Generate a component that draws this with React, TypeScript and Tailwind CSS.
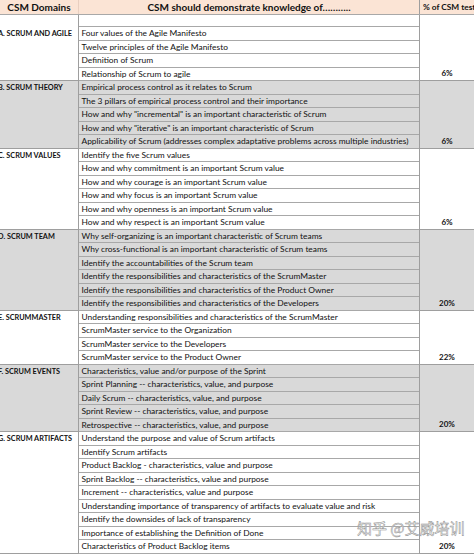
import React from 'react';

interface Section {
  label: string;
  items: string[];
  pct: string;
  gray: boolean;
  blankTop?: boolean;
}

const sections: Section[] = [
  {
    label: 'A. SCRUM AND AGILE',
    items: [
      'Four values of the Agile Manifesto',
      'Twelve principles of the Agile Manifesto',
      'Definition of Scrum',
      'Relationship of Scrum to agile',
    ],
    pct: '6%',
    gray: false,
    blankTop: true,
  },
  {
    label: 'B. SCRUM THEORY',
    items: [
      'Empirical process control as it relates to Scrum',
      'The 3 pillars of empirical process control and their importance',
      'How and why "incremental" is an important characteristic of Scrum',
      'How and why "iterative" is an important characteristic of Scrum',
      'Applicability of Scrum (addresses complex adaptative problems across multiple industries)',
    ],
    pct: '6%',
    gray: true,
  },
  {
    label: 'C. SCRUM VALUES',
    items: [
      'Identify the five Scrum values',
      'How and why commitment is an important Scrum value',
      'How and why courage is an important Scrum value',
      'How and why focus is an important Scrum value',
      'How and why openness is an important Scrum value',
      'How and why respect is an important Scrum value',
    ],
    pct: '6%',
    gray: false,
  },
  {
    label: 'D. SCRUM TEAM',
    items: [
      'Why self-organizing is an important characteristic of Scrum teams',
      'Why cross-functional is an important characteristic of Scrum teams',
      'Identify the accountabilities of the Scrum team',
      'Identify the responsibilities and characteristics of the ScrumMaster',
      'Identify the responsibilities and characteristics of the Product Owner',
      'Identify the responsibilities and characteristics of the Developers',
    ],
    pct: '20%',
    gray: true,
  },
  {
    label: 'E. SCRUMMASTER',
    items: [
      'Understanding responsibilities and characteristics of the ScrumMaster',
      'ScrumMaster service to the Organization',
      'ScrumMaster service to the Developers',
      'ScrumMaster service to the Product Owner',
    ],
    pct: '22%',
    gray: false,
  },
  {
    label: 'F. SCRUM EVENTS',
    items: [
      'Characteristics, value and/or purpose of the Sprint',
      'Sprint Planning -- characteristics, value, and purpose',
      'Daily Scrum -- characteristics, value, and purpose',
      'Sprint Review -- characteristics, value, and purpose',
      'Retrospective -- characteristics, value, and purpose',
    ],
    pct: '20%',
    gray: true,
  },
  {
    label: 'G. SCRUM ARTIFACTS',
    items: [
      'Understand the purpose and value of Scrum artifacts',
      'Identify Scrum artifacts',
      'Product Backlog - characteristics, value and purpose',
      'Sprint Backlog -- characteristics, value and purpose',
      'Increment -- characteristics, value and purpose',
      'Understanding importance of transparency of artifacts to evaluate value and risk',
      'Identify the downsides of lack of transparency',
      'Importance of establishing the Definition of Done',
      'Characteristics of Product Backlog items',
    ],
    pct: '20%',
    gray: false,
  },
];

const SectionRows = ({ s }: { s: Section }) => {
  const bg = s.gray ? 'bg-[#d9d9d9]' : 'bg-white';
  return (
    <div className={`flex ${bg}`}>
      {/* Domain column */}
      <div className="w-[79px] shrink-0 border-r border-b border-[#9e9e9e] overflow-hidden">
        {s.blankTop && <div className="h-[12px]" />}
        <div className="ml-[-2px] pt-[2px] text-[7.3px] font-bold leading-[10px] whitespace-nowrap text-[#111]">
          {s.label}
        </div>
      </div>

      {/* Topics column */}
      <div className="w-[341px] shrink-0 border-r border-[#9e9e9e] flex flex-col">
        {s.blankTop && <div className="h-[12px] border-b border-[#a8a8a8] bg-white" />}
        {s.items.map((item) => (
          <div
            key={item}
            className="h-[13.5px] border-b border-[#a8a8a8] pl-[2.5px] text-[8.4px] leading-[12.5px] whitespace-nowrap overflow-hidden text-[#111]"
          >
            {item}
          </div>
        ))}
      </div>

      {/* Percentage column */}
      <div className="flex-1 border-b border-[#9e9e9e] flex flex-col justify-end items-center">
        <div className="h-[13px] text-[8px] font-bold leading-[13px] text-[#111]">{s.pct}</div>
      </div>
    </div>
  );
};

export default function App() {
  return (
    <div
      className="relative w-[474px] h-[554px] overflow-hidden bg-white"
      style={{ fontFamily: 'Lato, "Noto Sans", sans-serif' }}
    >
      {/* Header */}
      <div className="flex h-[15px] bg-[#fbe4d5] border-b border-[#a8a8a8] text-[#111] font-bold">
        <div className="w-[79px] shrink-0 border-r border-[#e8cfc0] text-center text-[10px] leading-[14px]">
          CSM Domains
        </div>
        <div className="w-[341px] shrink-0 border-r border-[#9e9e9e] text-center text-[10px] leading-[14px] whitespace-nowrap">
          CSM should demonstrate knowledge of………..
        </div>
        <div className="flex-1 pl-[3px] text-[8.3px] leading-[14px] whitespace-nowrap overflow-hidden">
          % of CSM test
        </div>
      </div>

      {sections.map((s) => (
        <SectionRows key={s.label} s={s} />
      ))}

      {/* Watermark */}
      <div
        className="absolute left-[357px] top-[519px] text-[15px] leading-[18px] whitespace-nowrap text-white/80 [-webkit-text-stroke:0.5px_#8f8f8f]"
        style={{ fontFamily: '"Noto Sans CJK SC", sans-serif' }}
      >
        知乎 @艾威培训
      </div>
    </div>
  );
}
